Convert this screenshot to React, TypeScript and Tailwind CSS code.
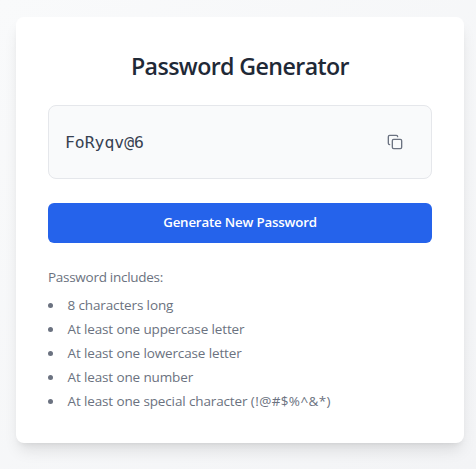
import { useState } from 'react';
import { Copy } from 'lucide-react';

const rules = [
  { text: '8 characters long' },
  { text: 'At least one uppercase letter' },
  { text: 'At least one lowercase letter' },
  { text: 'At least one number' },
  { text: 'At least one special character ', symbols: '(!@#$%^&*)' },
];

export default function App() {
  const [password] = useState('FoRyqv@6');
  return (
    <div className="h-screen overflow-hidden bg-white pb-px">
      <div className="flex h-full items-start overflow-hidden bg-gradient-to-br from-[#f9fafb] to-[#f3f4f6] pt-[17px] pl-4 font-['Open_Sans',sans-serif]">
        <div className="w-[448px] shrink-0 rounded-lg bg-white p-8 shadow-[0_10px_15px_-3px_rgba(0,0,0,0.1),0_4px_6px_-4px_rgba(0,0,0,0.1)]">
          <h1 className="mb-[23px] pt-0.5 text-center text-[23.2px] leading-[31px] font-semibold tracking-[-0.6px] text-[#1f2937]">
            Password Generator
          </h1>
          <div className="mb-6 flex h-[74px] items-center justify-between rounded-lg border border-[#e5e7eb] bg-[#f9fafb] px-4">
            <span className="pt-0.5 font-['DejaVu_Sans_Mono',monospace] text-[16.4px] text-[#374151]">{password}</span>
            <button className="p-3 text-[#6b7280]" aria-label="Copy password">
              <Copy size={16} />
            </button>
          </div>
          <button className="flex h-10 w-full items-center justify-center rounded-md bg-[#2563eb] text-[13.3px] font-semibold tracking-[-0.18px] text-white">
            Generate New Password
          </button>
          <div className="mt-6 text-[13.5px] leading-5 tracking-[-0.13px] text-[#6b7280]">
            <p className="mb-2 tracking-[-0.28px]">Password includes:</p>
            <ul className="list-inside list-disc space-y-1">
              {rules.map((rule) => (
                <li key={rule.text}>
                  {rule.text}
                  {rule.symbols && <span className="tracking-[0.4px]">{rule.symbols}</span>}
                </li>
              ))}
            </ul>
          </div>
        </div>
      </div>
    </div>
  );
}
